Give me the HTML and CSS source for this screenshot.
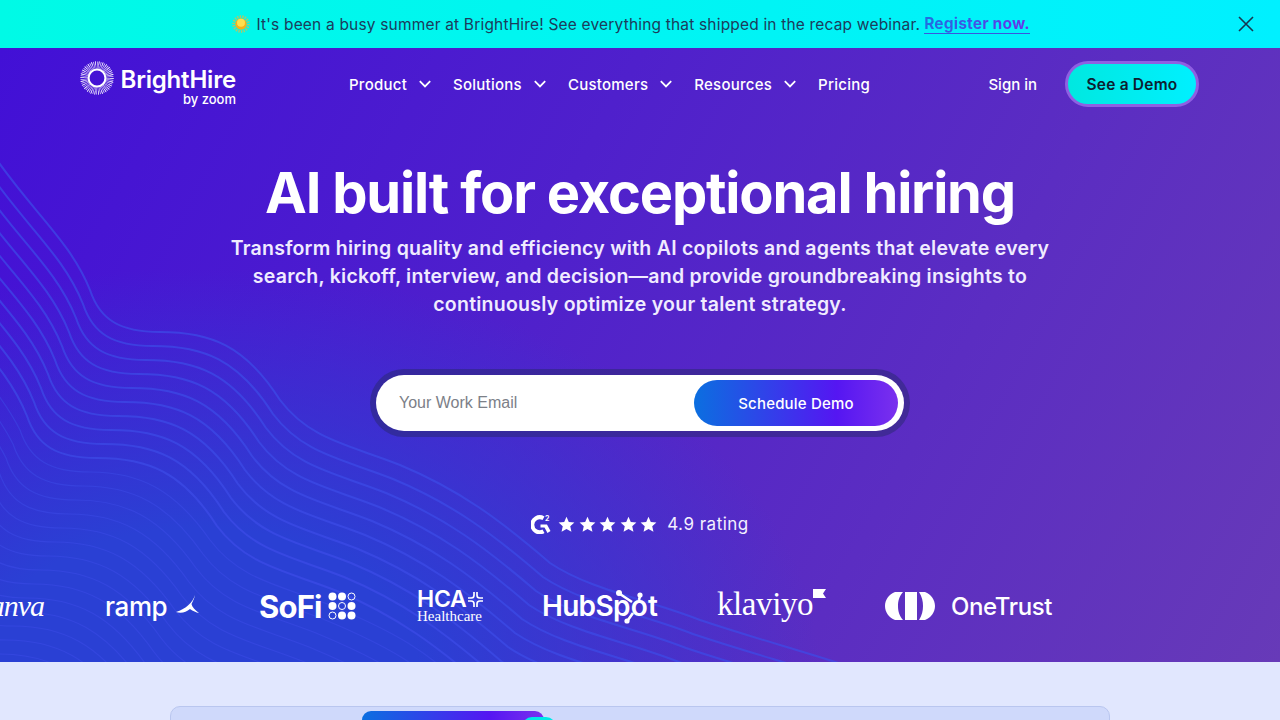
FILE: index.html
```html
<!DOCTYPE html>
<html lang="en">
<head>
    <meta charset="UTF-8">
    <title>BrightHire</title>
    <link rel="stylesheet" href="styles.css">
</head>

<body>
    <div class="banner">
        <svg class="sun" viewBox="0 0 18 18">
            <circle cx="9" cy="9" r="7.5" fill="none" stroke="#d9b94e" stroke-width="2.6" stroke-dasharray="1.4 1.2" opacity="0.8"/>
            <circle cx="9" cy="9" r="5.8" fill="#f5b01c"/>
            <circle cx="9" cy="7.8" r="4" fill="#ffdf4d"/>
        </svg>
        <span class="bannerText">It's been a busy summer at BrightHire! See everything that shipped in the recap webinar.</span>
        <a class="register" href="#">Register now.</a>
        <svg class="close" viewBox="0 0 16 16">
            <path d="M1 1 L15 15 M15 1 L1 15" stroke="#17364f" stroke-width="1.6" fill="none"/>
        </svg>
    </div>

    <section class="hero">
        <svg class="waves" viewBox="0 48 1280 614" preserveAspectRatio="none">
            <defs>
                <path id="lineA" d="M-10 150 C30 210 70 240 90 290 C100 320 120 332 160 332 C210 332 245 345 280 400 C310 440 350 445 400 465 C460 490 500 520 550 563 C590 590 650 600 700 620 C760 640 800 650 860 670"/>
                <path id="lineB" d="M-80 290 C-40 350 0 390 20 430 C30 460 50 472 90 472 C140 472 175 490 210 540 C240 580 280 585 330 605 C390 630 430 650 480 703"/>
                <g id="fiveA">
                    <use href="#lineA"/>
                    <use href="#lineA" transform="translate(-7 14)"/>
                    <use href="#lineA" transform="translate(-14 28)"/>
                    <use href="#lineA" transform="translate(-21 42)"/>
                    <use href="#lineA" transform="translate(-28 56)"/>
                </g>
                <g id="fiveB">
                    <use href="#lineB"/>
                    <use href="#lineB" transform="translate(-7 14)"/>
                    <use href="#lineB" transform="translate(-14 28)"/>
                    <use href="#lineB" transform="translate(-21 42)"/>
                    <use href="#lineB" transform="translate(-28 56)"/>
                </g>
            </defs>
            <g class="lines linesTop">
                <use href="#fiveA"/>
                <use href="#fiveA" transform="translate(-35 70)"/>
            </g>
            <g class="lines linesLow">
                <use href="#fiveB"/>
                <use href="#fiveB" transform="translate(-35 70)"/>
                <use href="#fiveB" transform="translate(-70 140)"/>
                <use href="#fiveB" transform="translate(-105 210)"/>
            </g>
        </svg>

        <header class="nav">
            <a class="logo" href="#">
                <svg class="logoMark" viewBox="0 0 34 34">
                    <circle cx="17" cy="17" r="12.500" fill="none" stroke="#fff" stroke-width="8" stroke-dasharray="0.6 0.9" opacity="0.85"/>
                    <circle cx="17" cy="17" r="15" fill="none" stroke="#fff" stroke-width="3.800" stroke-dasharray="0.6 3" opacity="0.8"/>
                    <circle cx="17" cy="17" r="8.400" fill="none" stroke="#fff" stroke-width="2"/>
                </svg>
                <span class="logoText">
                    <span class="logoName">BrightHire</span>
                    <span class="logoSub">by zoom</span>
                </span>
            </a>
            <nav class="menu">
                <a class="menuItem" href="#">Product <svg class="chev" viewBox="0 0 12 8"><path d="M.8 1.2 L6 6.400 L11.200 1.200"/></svg></a>
                <a class="menuItem" href="#">Solutions <svg class="chev" viewBox="0 0 12 8"><path d="M.8 1.2 L6 6.400 L11.200 1.200"/></svg></a>
                <a class="menuItem" href="#">Customers <svg class="chev" viewBox="0 0 12 8"><path d="M.8 1.2 L6 6.400 L11.200 1.200"/></svg></a>
                <a class="menuItem" href="#">Resources <svg class="chev" viewBox="0 0 12 8"><path d="M.8 1.2 L6 6.400 L11.200 1.200"/></svg></a>
                <a class="menuItem" href="#">Pricing</a>
            </nav>
            <div class="navRight">
                <a class="signIn" href="#">Sign in</a>
                <a class="demoBtn" href="#">See a Demo</a>
            </div>
        </header>

        <div class="heroBody">
            <h1 class="title">AI built for exceptional hiring</h1>
            <p class="lead">Transform hiring quality and efficiency with AI copilots and agents that elevate every search, kickoff, interview, and decision—and provide groundbreaking insights to continuously optimize your talent strategy.</p>

            <form class="emailForm">
                <input class="emailInput" type="text" placeholder="Your Work Email">
                <button class="scheduleBtn" type="button">Schedule Demo</button>
            </form>

            <div class="rating">
                <svg class="g2" viewBox="0 0 20 20">
                    <path d="M12.500 4.200 A7.500 7.500 0 1 0 12.500 17.200" fill="none" stroke="#fff" stroke-width="4"/>
                    <path d="M9.500 10.500 L16 10.500 L19.500 17 L16.500 19 L13.500 13.500 L9.500 13.500 Z" fill="#fff"/>
                    <text x="14" y="6.500" class="g2Two">2</text>
                </svg>
                <span class="stars">
                    <svg class="star" viewBox="0 0 20 20"><path d="M10 1 L12.7 7 L19.3 7.7 L14.4 12.1 L15.8 18.6 L10 15.3 L4.2 18.6 L5.6 12.1 L.7 7.7 L7.3 7 Z"/></svg>
                    <svg class="star" viewBox="0 0 20 20"><path d="M10 1 L12.7 7 L19.3 7.7 L14.4 12.1 L15.8 18.6 L10 15.3 L4.2 18.6 L5.6 12.1 L.7 7.7 L7.3 7 Z"/></svg>
                    <svg class="star" viewBox="0 0 20 20"><path d="M10 1 L12.7 7 L19.3 7.7 L14.4 12.1 L15.8 18.6 L10 15.3 L4.2 18.6 L5.6 12.1 L.7 7.7 L7.3 7 Z"/></svg>
                    <svg class="star" viewBox="0 0 20 20"><path d="M10 1 L12.7 7 L19.3 7.7 L14.4 12.1 L15.8 18.6 L10 15.3 L4.2 18.6 L5.6 12.1 L.7 7.7 L7.3 7 Z"/></svg>
                    <svg class="star" viewBox="0 0 20 20"><path d="M10 1 L12.7 7 L19.3 7.7 L14.4 12.1 L15.8 18.6 L10 15.3 L4.2 18.6 L5.6 12.1 L.7 7.7 L7.3 7 Z"/></svg>
                </span>
                <span class="ratingText">4.9 rating</span>
            </div>
        </div>

        <div class="logos">
            <div class="brand canva">Canva</div>
            <div class="brand ramp">
                <span>ramp</span>
                <svg class="rampMark" viewBox="0 0 24 20"><path d="M19 1 C17 8 10 15 0 18 C5 19.500 10 18.500 14 15 C17 17 20 18.500 23 19 C19 16 16 13 15.500 10 C17 7 18.500 4 19 1 Z" fill="#fff"/></svg>
            </div>
            <div class="brand sofi">
                <span>SoFi</span>
                <svg class="sofiMark" viewBox="0 0 28 28">
                    <circle cx="4.500" cy="4.500" r="4"/><circle cx="14" cy="4.500" r="4"/><circle class="hollow" cx="23.500" cy="4.500" r="3.500"/>
                    <circle cx="4.500" cy="14" r="4"/><circle class="hollow" cx="14" cy="14" r="3.500"/><circle cx="23.500" cy="14" r="4"/>
                    <circle class="hollow" cx="4.500" cy="23.500" r="3.500"/><circle cx="14" cy="23.500" r="4"/><circle cx="23.500" cy="23.500" r="4"/>
                </svg>
            </div>
            <div class="brand hca">
                <div class="hcaTop">
                    <span>HCA</span>
                    <svg class="hcaMark" viewBox="0 0 16 16">
                        <path id="hcaCorner" d="M5.500 0 H7.300 V3.500 Q7.300 7.300 3.500 7.300 H0 V5.500 H3.500 Q5.500 5.500 5.500 3.500 Z" fill="#fff"/>
                        <use href="#hcaCorner" transform="rotate(90 8 8)"/>
                        <use href="#hcaCorner" transform="rotate(180 8 8)"/>
                        <use href="#hcaCorner" transform="rotate(270 8 8)"/>
                    </svg>
                </div>
                <span class="hcaSub">Healthcare</span>
            </div>
            <div class="brand hubspot">HubSp<span class="hubO">o<svg class="hubSpokes" viewBox="0 0 30 36"><path d="M5 4 L17 12 M25 6 L24 10 M13 30 L18 23" stroke="#fff" stroke-width="2.600" fill="none"/><circle cx="4" cy="3" r="3" fill="#fff"/><circle cx="25" cy="5" r="2.600" fill="#fff"/><circle cx="12" cy="31" r="2.600" fill="#fff"/></svg></span>t</div>
            <div class="brand klaviyo">
                <span>klaviyo</span>
                <svg class="klaviyoFlag" viewBox="0 0 13 10"><path d="M0 0 H13 L10 4.500 L13 9 H0 Z" fill="#fff"/></svg>
            </div>
            <div class="brand onetrust">
                <svg class="otMark" viewBox="0 0 50 28">
                    <path d="M10 0 H18 C14 5 13 9 13 14 C13 19 14 23 18 28 H10 C4 26 0 20 0 14 C0 8 4 2 10 0 Z" fill="#fff"/>
                    <path d="M20 0 H32 V28 H20 Z" fill="#fff"/>
                    <path d="M34 0 H40 C46 2 50 8 50 14 C50 20 46 26 40 28 H34 C37 23 38 19 38 14 C38 9 37 5 34 0 Z" fill="#fff"/>
                </svg>
                <span>OneTrust</span>
            </div>
        </div>
    </section>

    <section class="below">
        <div class="panel">
            <div class="panelBar"></div>
            <div class="panelPill"></div>
        </div>
    </section>
</body></html>
```

FILE: styles.css
```css
* {
    margin: 0;
    padding: 0;
    box-sizing: border-box;
}

body {
    height: 720px;
    overflow: hidden;
    font-family: Inter, "Noto Sans", sans-serif;
    background: #e1e7fe;
}

a {
    text-decoration: none;
    color: inherit;
}

.banner {
    height: 48px;
    display: flex;
    align-items: center;
    justify-content: center;
    gap: 6px;
    padding-right: 18px;
    position: relative;
    background: linear-gradient(90deg, #00fae6, #00f0ff);
    color: #1c3c5c;
    font-size: 15.5px;
    letter-spacing: 0.18px;
}

.sun {
    width: 18px;
    height: 18px;
}

.register {
    font-weight: 700;
    margin-left: -2px;
    letter-spacing: 0.2px;
    background: linear-gradient(90deg, #1f6fe0, #6a30e8);
    -webkit-background-clip: text;
    background-clip: text;
    color: transparent;
    border-bottom: 1.5px solid #3a55e0;
    line-height: 18px;
}

.close {
    position: absolute;
    right: 26px;
    top: 16px;
    width: 16px;
    height: 16px;
}

.hero {
    position: relative;
    height: 614px;
    overflow: hidden;
    background:
        radial-gradient(ellipse 620px 400px at 200px 620px, #2a40d4 0%, #2a40d4 35%, rgba(42, 64, 212, 0.5) 65%, rgba(42, 64, 212, 0) 100%),
        linear-gradient(118deg, #4210d6 0%, #4f20cc 40%, #673ab8 100%);
    color: #fff;
}

.waves {
    position: absolute;
    left: 0;
    top: 0;
    width: 1280px;
    height: 614px;
}

.lines {
    fill: none;
    stroke: #3d4ce8;
}

.linesTop {
    stroke-width: 2;
    opacity: 0.7;
}

.linesLow {
    stroke-width: 1.2;
    opacity: 0.5;
}

.nav {
    position: relative;
    height: 72px;
    display: flex;
    align-items: center;
    padding: 0 80px;
}

.logo {
    display: flex;
    align-items: center;
    gap: 8px;
    width: 269px;
}

.logoMark {
    flex: none;
    width: 34px;
    height: 34px;
    margin-top: -12px;
}

.logoText {
    display: flex;
    flex-direction: column;
    align-items: flex-end;
    width: 114px;
    margin-top: 4px;
}

.logoName {
    font-size: 24px;
    font-weight: 600;
    line-height: 26px;
    letter-spacing: -0.2px;
}

.logoSub {
    font-size: 13px;
    font-weight: 500;
    line-height: 13px;
}

.menu {
    display: flex;
    align-items: center;
    gap: 22px;
}

.menuItem {
    display: flex;
    align-items: center;
    gap: 12px;
    font-size: 15px;
    font-weight: 500;
    letter-spacing: 0.25px;
}

.chev {
    width: 12px;
    height: 8px;
    fill: none;
    stroke: #fff;
    stroke-width: 1.8;
}

.navRight {
    margin-left: auto;
    display: flex;
    align-items: center;
    gap: 28px;
}

.signIn {
    font-size: 15px;
    font-weight: 500;
}

.demoBtn {
    width: 134px;
    height: 46px;
    display: flex;
    align-items: center;
    justify-content: center;
    border: 3px solid #8f5fe2;
    border-radius: 23px;
    margin-right: 1px;
    background: linear-gradient(90deg, #00e8e0, #00f0ff);
    color: #0d2030;
    font-size: 15.5px;
    font-weight: 600;
    letter-spacing: 0.2px;
}

.heroBody {
    position: relative;
    display: flex;
    flex-direction: column;
    align-items: center;
    padding-top: 41px;
}

.title {
    font-size: 56px;
    line-height: 64px;
    font-weight: 700;
    letter-spacing: -1.2px;
}

.lead {
    width: 840px;
    margin-top: 9px;
    font-size: 19.5px;
    line-height: 28px;
    font-weight: 600;
    letter-spacing: 0.25px;
    text-align: center;
    color: #f0ebff;
}

.emailForm {
    margin-top: 57px;
    width: 528px;
    height: 56px;
    display: flex;
    align-items: center;
    justify-content: space-between;
    padding: 0 6px 0 23px;
    border-radius: 28px;
    background: #fff;
    box-shadow: 0 0 0 6px rgba(40, 40, 110, 0.5);
}

.emailInput {
    width: 280px;
    border: none;
    outline: none;
    background: transparent;
    font-family: "Liberation Sans", Arial, sans-serif;
    font-size: 16px;
    margin-top: -1px;
}

.emailInput::placeholder {
    color: #7c8088;
}

.scheduleBtn {
    width: 204px;
    height: 46px;
    border: none;
    border-radius: 23px;
    background: linear-gradient(90deg, #0b6fe0 0%, #5516f2 70%, #7a30ee 100%);
    color: #fff;
    font-family: Inter, sans-serif;
    font-size: 15px;
    font-weight: 500;
    letter-spacing: 0.2px;
}

.rating {
    margin-top: 81px;
    height: 24px;
    display: flex;
    align-items: center;
    gap: 7px;
}

.g2 {
    width: 20px;
    height: 20px;
}

.g2Two {
    font-family: Inter, sans-serif;
    font-size: 7px;
    font-weight: 700;
    fill: #fff;
}

.stars {
    display: flex;
    gap: 3.5px;
}

.star {
    width: 17px;
    height: 17px;
    fill: #fff;
}

.ratingText {
    margin-left: 3px;
    font-size: 17px;
    letter-spacing: 0.5px;
    color: #f4f0ff;
}

.logos {
    position: relative;
    margin-top: 50px;
    height: 40px;
    display: flex;
    align-items: center;
    gap: 61px;
    margin-left: -37px;
}

.brand {
    flex: none;
    display: flex;
    align-items: center;
    height: 40px;
    white-space: nowrap;
}

.canva {
    width: 81px;
    font-family: "Liberation Serif", serif;
    font-style: italic;
    font-size: 30px;
    letter-spacing: -1px;
    justify-content: flex-end;
}

.ramp {
    width: 93px;
    gap: 9px;
    font-size: 26px;
    font-weight: 500;
    letter-spacing: -0.4px;
}

.rampMark {
    flex: none;
    width: 24px;
    height: 20px;
    margin-top: -4px;
}

.sofi {
    width: 97px;
    gap: 6px;
    font-size: 31px;
    font-weight: 700;
    letter-spacing: -0.8px;
}

.sofiMark {
    flex: none;
    width: 28px;
    height: 28px;
    fill: #fff;
}

.sofiMark .hollow {
    fill: none;
    stroke: #fff;
    stroke-width: 1;
}

.hca {
    width: 64px;
    flex-direction: column;
    align-items: flex-start;
    justify-content: center;
}

.hcaTop {
    display: flex;
    align-items: center;
    gap: 1px;
    font-size: 23px;
    line-height: 21px;
    font-weight: 600;
    letter-spacing: -0.2px;
}

.hcaMark {
    flex: none;
    width: 15px;
    height: 15px;
}

.hcaSub {
    font-family: "Liberation Serif", serif;
    font-size: 15px;
    line-height: 13px;
}

.hubspot {
    width: 114px;
    font-size: 28px;
    font-weight: 600;
    letter-spacing: -0.7px;
}

.hubO {
    position: relative;
    margin: 0 1px;
}

.hubSpokes {
    position: absolute;
    left: -16px;
    top: 1px;
    width: 30px;
    height: 36px;
}

.klaviyo {
    width: 107px;
    align-items: flex-start;
    font-family: "Liberation Serif", serif;
    font-size: 33px;
    line-height: 36px;
    letter-spacing: -0.4px;
}

.klaviyoFlag {
    flex: none;
    width: 13px;
    height: 10px;
    margin-top: 3px;
}

.onetrust {
    width: 168px;
    gap: 16px;
    font-size: 24px;
    font-weight: 500;
    letter-spacing: -0.4px;
}

.otMark {
    flex: none;
    width: 50px;
    height: 28px;
}

.below {
    height: 58px;
    overflow: hidden;
    padding-top: 44px;
}

.panel {
    position: relative;
    width: 940px;
    height: 40px;
    margin: 0 auto;
    padding: 4px 0 0 191px;
    background: #cfd9fb;
    border: 1px solid #b9c6ef;
    border-radius: 10px;
}

.panelBar {
    width: 182px;
    height: 40px;
    border-radius: 9px 9px 0 0;
    background: linear-gradient(90deg, #0b6fe0 0%, #5516f2 70%, #7a30ee 100%);
}

.panelPill {
    position: absolute;
    left: 351px;
    top: 10px;
    width: 34px;
    height: 20px;
    border-radius: 10px;
    background: #00e8e8;
}
```
